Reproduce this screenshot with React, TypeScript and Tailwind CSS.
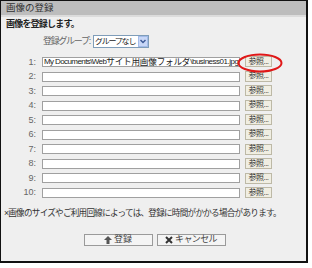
import React from "react";

const font = "font-['Liberation_Sans','Noto_Sans_CJK_JP',sans-serif]";

function RefButton() {
  return (
    <div className="w-[27px] h-[11px] -mt-[0.5px] shrink-0 bg-[#f0eee2] border border-[#bdb9a6] flex items-center justify-center text-[8px] leading-none text-[#333] tracking-[-0.5px]">
      参照...
    </div>
  );
}

function Row({ n, value }: { n: number; value?: React.ReactNode }) {
  return (
    <div className="flex items-center h-[10px]">
      <div className="w-[36px] text-right text-[9px] leading-none text-[#666] pr-[1px]">{n}:</div>
      <div className="ml-[5px] w-[198px] h-[10px] bg-white border border-[#a0a0a0] overflow-hidden whitespace-nowrap flex items-center pl-[1px] text-[#222] leading-none">
        {value}
      </div>
      <div className="ml-[5px]">
        <RefButton />
      </div>
    </div>
  );
}

export default function App() {
  const rows = [1, 2, 3, 4, 5, 6, 7, 8, 9, 10];
  return (
    <div className={`w-[312px] h-[268px] bg-white ${font}`}>
      <div className="relative w-[308px] h-[263px] bg-[#efefef] border-t border-l border-r-2 border-b-2 border-[#111] flex flex-col">
        <div className="h-[16px] bg-[#bdbdbd] border-b-2 border-[#dcdcdc] flex items-center pl-[5px] text-[9.5px] text-[#333] leading-none">
          画像の登録
        </div>
        <div className="mt-[2px] h-[10px] pl-[5px] text-[9px] font-bold text-[#222] leading-[10px] tracking-[-0.8px]">
          画像を登録します。
        </div>
        <div className="mt-[6px] h-[13px] pl-[42px] flex items-center">
          <span className="text-[9px] text-[#666] leading-none tracking-[-1.3px]">登録グループ:</span>
          <div className="ml-[3px] w-[56px] h-[13px] bg-white border border-[#7f9db9] flex items-center">
            <span className="flex-1 pl-[1px] text-[8px] leading-none text-[#222] tracking-[-1.2px] whitespace-nowrap overflow-hidden">
              グループなし
            </span>
            <div className="w-[10px] h-[11px] shrink-0 bg-[#c8d7f7] border border-[#a3bbe8] flex items-center justify-center">
              <svg width="6" height="5" viewBox="0 0 6 5">
                <path d="M0.5 1 L3 3.6 L5.5 1" stroke="#3c5a96" strokeWidth="1.4" fill="none" />
              </svg>
            </div>
          </div>
        </div>
        <div className="mt-[9px] flex flex-col gap-[4.56px]">
          {rows.map((n) => (
            <Row
              key={n}
              n={n}
              value={
                n === 1 ? (
                  <>
                    <span className="text-[8px] tracking-[-0.6px]">My Documents\Web</span>
                    <span className="text-[8.6px] tracking-[-0.2px]">サイト用画像フォルダ</span>
                    <span className="text-[8px] tracking-[-0.5px]">\business01.jpg</span>
                  </>
                ) : null
              }
            />
          ))}
        </div>
        <div className="mt-[10px] h-[10px] pl-[3px] text-[8.6px] leading-[10px] text-[#333] tracking-[-0.75px] whitespace-nowrap">
          ×画像のサイズやご利用回線によっては、登録に時間がかかる場合があります。
        </div>
        <div className="mt-[16px] flex justify-center gap-[4px] pl-[2px]">
          <div className="w-[69px] h-[12px] bg-[#f4f4f4] border border-[#9a9a9a] flex items-center justify-center gap-[2px] text-[9px] leading-none text-[#444]">
            <svg width="8" height="8" viewBox="0 0 8 8">
              <polygon points="4,0 8,4 5.5,4 5.5,8 2.5,8 2.5,4 0,4" fill="#555" />
            </svg>
            <span>登録</span>
          </div>
          <div className="w-[69px] h-[12px] bg-[#f4f4f4] border border-[#9a9a9a] flex items-center justify-center gap-[2px] text-[9px] leading-none text-[#444] tracking-[-0.6px]">
            <svg width="8" height="8" viewBox="0 0 8 8">
              <path d="M1 1 L7 7 M7 1 L1 7" stroke="#333" strokeWidth="2" />
            </svg>
            <span>キャンセル</span>
          </div>
        </div>
        <svg
          className="absolute left-[236px] top-[52px]"
          width="46"
          height="20"
          viewBox="0 0 46 20"
        >
          <ellipse cx="23" cy="10" rx="21.5" ry="8.5" stroke="#e01818" strokeWidth="2" fill="none" />
        </svg>
      </div>
    </div>
  );
}
